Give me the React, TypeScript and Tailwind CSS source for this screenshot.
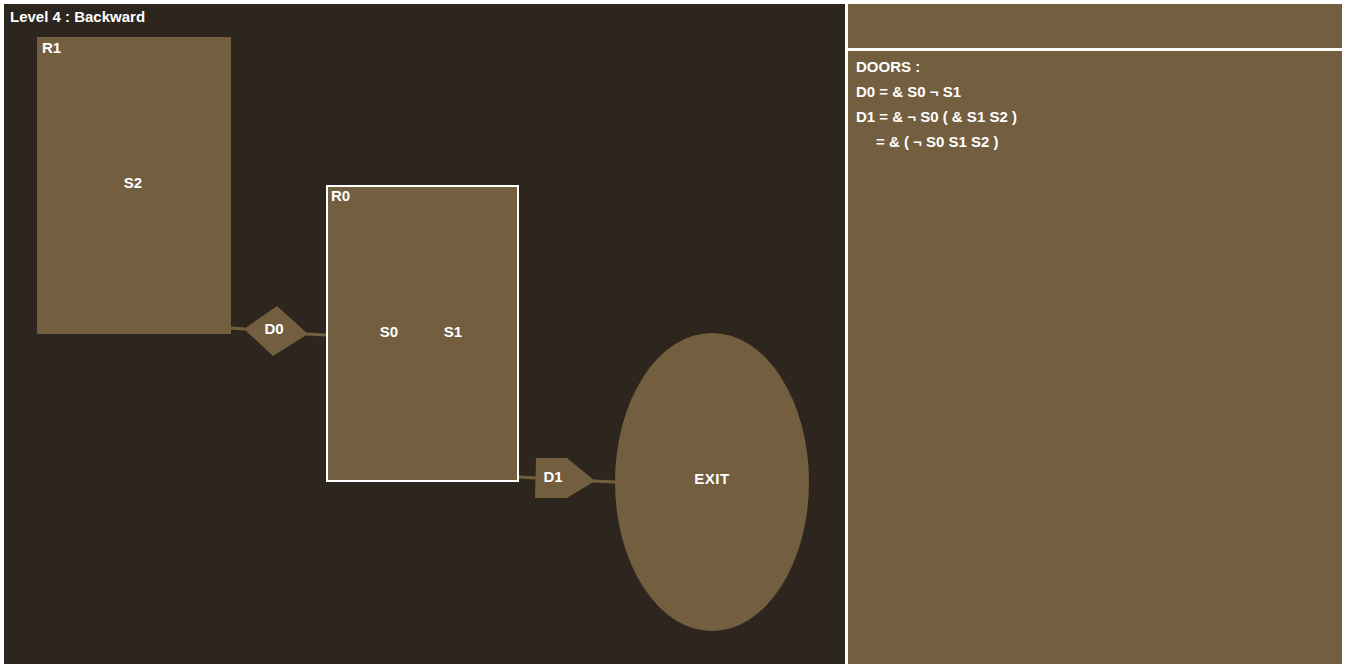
import React from 'react';

const BROWN = '#735e3f';

// canvas coordinates are relative to the left panel (page offset 4,4)
const Label: React.FC<{ x: number; y: number; children: React.ReactNode }> = ({ x, y, children }) => (
  <div
    className="absolute -translate-x-1/2 -translate-y-1/2 whitespace-nowrap text-[15px] leading-4 font-bold text-white"
    style={{ left: x, top: y }}
  >
    {children}
  </div>
);

const Board: React.FC = () => (
  <div className="relative w-[841px] h-full bg-[#2d261e] overflow-hidden">
    <div className="absolute left-[6px] top-[5px] text-[15px] leading-4 font-bold text-white">
      Level 4 : Backward
    </div>

    <svg className="absolute inset-0" width="841" height="660" viewBox="0 0 841 660">
      {/* connectors */}
      <polyline points="227,324 241,325" stroke={BROWN} strokeWidth="3" fill="none" />
      <polyline points="302,330 322,331" stroke={BROWN} strokeWidth="3" fill="none" />
      <polyline points="515,473 532,474" stroke={BROWN} strokeWidth="3" fill="none" />
      <polyline points="589,477 612,478" stroke={BROWN} strokeWidth="3" fill="none" />
      {/* door D0 */}
      <polygon points="273,302 304,330 269,352 240,325" fill={BROWN} />
      {/* door D1 */}
      <polygon points="532,454 563,454 591,477 563,494 531,494" fill={BROWN} />
      {/* exit */}
      <ellipse cx="708" cy="478" rx="97" ry="149" fill={BROWN} />
    </svg>

    {/* room R1 */}
    <div className="absolute left-[33px] top-[33px] w-[194px] h-[297px] bg-[#735e3f] px-[5px] pt-[3px]">
      <div className="text-[15px] leading-4 font-bold text-white">R1</div>
    </div>
    <Label x={129} y={179}>S2</Label>

    {/* room R0 */}
    <div className="absolute left-[322px] top-[181px] w-[193px] h-[297px] bg-[#735e3f] border-2 border-white px-[3px] pt-[1px]">
      <div className="text-[15px] leading-4 font-bold text-white">R0</div>
    </div>
    <Label x={385} y={328}>S0</Label>
    <Label x={449} y={328}>S1</Label>

    <Label x={270} y={325}>D0</Label>
    <Label x={549} y={473}>D1</Label>
    <Label x={708} y={475}>
      <span className="tracking-[0.5px]">EXIT</span>
    </Label>
  </div>
);

const SidePanel: React.FC = () => (
  <div className="flex flex-col gap-[3px] w-[494px] h-full">
    <div className="h-[44px] bg-[#735e3f]" />
    <div className="flex-1 bg-[#735e3f] px-[8px] pt-[3px] text-[15px] leading-[25px] font-bold text-white">
      <div>DOORS :</div>
      <div>D0 = &amp; S0 ¬ S1</div>
      <div>D1 = &amp; ¬ S0 ( &amp; S1 S2 )</div>
      <div className="pl-[20px]">= &amp; ( ¬ S0 S1 S2 )</div>
    </div>
  </div>
);

export default function App() {
  return (
    <div
      className="w-[1346px] h-[668px] bg-white p-[4px] flex gap-[3px]"
      style={{ fontFamily: '"Liberation Sans", Arial, sans-serif' }}
    >
      <Board />
      <SidePanel />
    </div>
  );
}
